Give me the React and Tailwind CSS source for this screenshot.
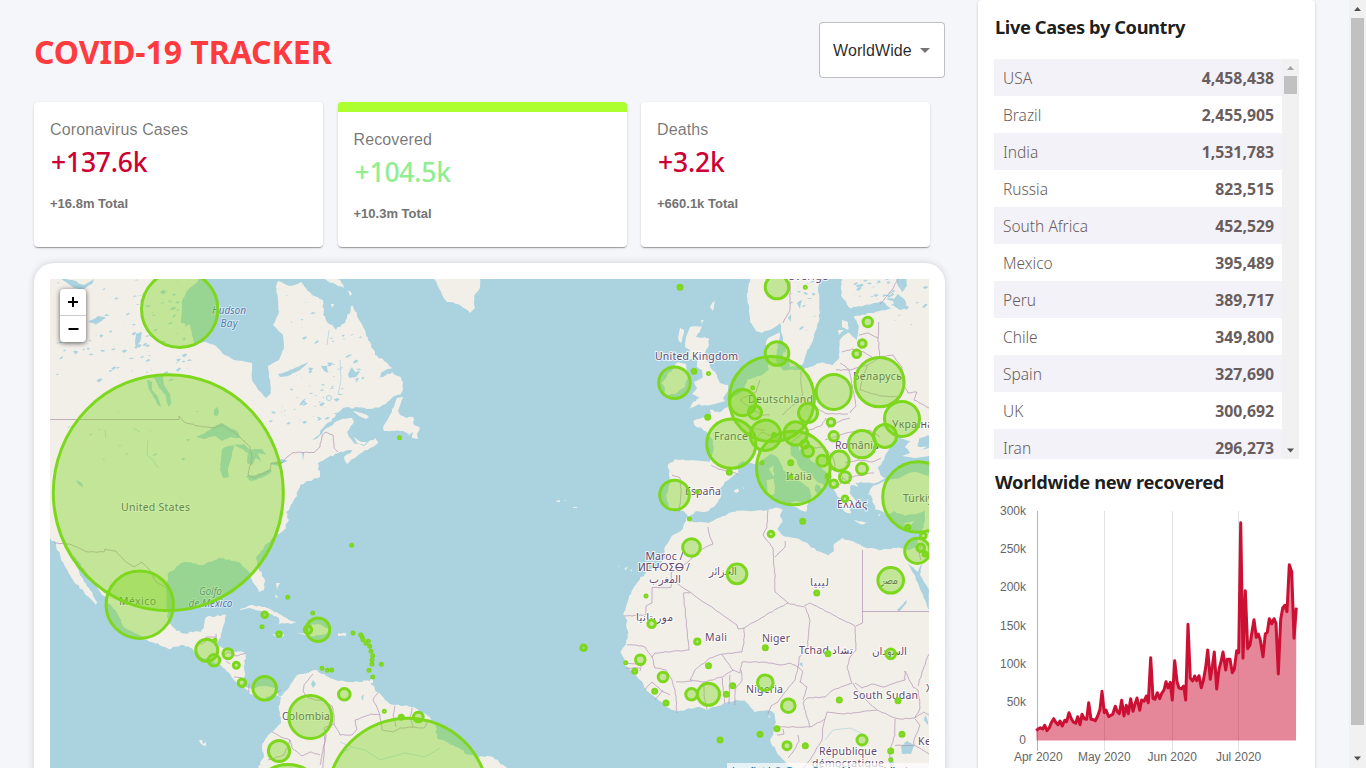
import React from "react";

const X = (lon) => 720 + 5.69 * lon;
const Y = (lat) =>
  736.5 - 325.95 * Math.log(Math.tan(Math.PI / 4 + (lat * Math.PI) / 360));

function geo(list, close = true) {
  let d = "";
  for (let i = 0; i < list.length; i += 2) {
    d += (i ? "L" : "M") + X(list[i]).toFixed(1) + " " + Y(list[i + 1]).toFixed(1);
  }
  return close ? d + "Z" : d;
}

const rand = (() => {
  let s = 7;
  return () => {
    s = (s * 16807) % 2147483647;
    return s / 2147483647;
  };
})();

// Adds small irregular detours between vertices so that coasts look natural.
function rough(d, amp = 1.1) {
  return d.replace(/[^MZ]+/g, (seg) => {
    const n = seg.match(/-?\d+(\.\d+)?/g);
    if (!n) return seg;
    const p = n.map(Number);
    let out = p[0] + " " + p[1];
    for (let i = 2; i < p.length; i += 2) {
      const dx = p[i] - p[i - 2];
      const dy = p[i + 1] - p[i - 1];
      const steps = Math.min(14, Math.floor(Math.hypot(dx, dy) / 2.6));
      for (let k = 1; k < steps; k++) {
        const t = k / steps;
        out +=
          "L" + (p[i - 2] + dx * t + (rand() - 0.5) * 2 * amp).toFixed(1) +
          " " + (p[i - 1] + dy * t + (rand() - 0.5) * 2 * amp).toFixed(1);
      }
      out += "L" + p[i] + " " + p[i + 1];
    }
    return out;
  });
}

const americas =
  "M40 270L278 270 277 281 283 283 290 286 301 282 306 288 312 295 323 300 323 315 329 324 336 330 345 323 352 305 357 316 363 327 370 342 375 355 384 361 393 368 384 371 377 378 385 376 392 372 398 376 403 382 402 392 390 400 378 408 343 408 335 417 323 428 318 437 327 428 334 423 340 420 352 418 354 422 347 432 351 439 355 444 364 446 368 442 375 438 378 443 370 448 363 452 355 458 347 464 344 457 352 450 338 453 318 463 320 477 308 481 300 485 295 498 289 510 286 512 289 520 284 530 274 537 264 547 256 558 257 565 264 578 264 590 259 592 252 580 249 572 239 562 221 558 211 562 201 565 190 562 181 563 169 572 166 587 167 607 169 623 181 633 201 632 206 617 226 615 221 637 216 644 227 650 246 653 244 677 242 685 252 689 265 686 276 689 279 697 287 690 297 675 314 670 333 679 350 682 370 681 375 690 385 700 395 705 412 707 430 717 436 727 437 738 453 745 470 755 493 757 508 769 508 780 262 780 258 766 264 757 262 747 267 737 281 723 279 710 281 697 272 694 262 700 249 692 234 680 221 665 201 657 191 648 181 645 171 649 147 640 124 627 117 613 101 593 88 575 77 560 67 547 84 582 97 602 96 605 84 592 71 577 61 560 56 544 50 538 40 534Z";

const smallLand = [
  "M434 279L440 290 447 302 458 304 470 313 475 308 474 296 480 288 480 270 434 270Z",
  "M325 279L333 283 344 288 340 280 330 275Z",
  "M348 290L352 294 350 296Z",
  "M331 304L334 304 332 308Z",
  "M264 280L269 284 268 291 264 289Z",
  "M240 279L247 279 244 285Z",
  "M353 411L362 413 369 417 366 419 359 416Z",
  "M354 437L362 442 367 442 364 445 357 443Z",
  "M403 397L397 398 394 407 390 415 383 428 384 431 403 431 409 434 405 438 413 432 412 438 418 439 417 434 420 428 414 425 413 417 407 418 400 415 398 411Z",
  "M239 610L251 605 267 608 284 617 297 623 279 624 279 618 262 611 250 608Z",
  "M297 633L310 633 305 626 318 624 332 630 322 635 309 636Z",
  "M338 633L346 633 346 636 338 636Z",
  "M272 634L284 634 284 636 276 637Z",
  "M276 583L280 583 277 590Z",
  "M275 594L278 597 276 598Z",
  "M371 679L373 679 373 683 369 683Z",
  "M199 740L202 740 203 744 206 742 206 746 201 744Z",
  "M556 501L560 500 560 502 557 502ZM573 507L577 507 577 508 573 508ZM564 500L566 500 566 501Z",
  "M690 327L702 326 696 337 709 338 709 345 703 357 708 362 712 370 717 375 720 383 728 385 728 391 723 398 725 401 710 405 697 405 688 410 693 402 700 398 692 394 697 388 694 382 703 377 702 370 697 367 699 357 688 360 690 350 685 347 686 337Z",
  "M680 328L684 330 681 343 678 338Z",
  "M712 303L715 301 713 311 710 307Z",
  "M701 320L704 320 702 325Z",
  "M668 373L673 369 678 362 686 364 688 374 685 387 677 393 663 396 665 388 661 383 666 378Z",
  "M750 279L747 297 749 310 750 322 756 331 762 333 770 330 780 323 783 340 788 357 790 367 802 365 807 350 813 340 817 327 820 313 818 290 822 270 750 270Z",
  "M787 352L792 357 786 360 783 356Z",
  "M842 320L848 322 848 330 842 327Z",
  "M838 330L844 330 839 335Z",
];

const geoLand = [
  // Europe with the Balkans and the Russian plain
  [-4.7, 48.4, -3, 48.8, -1.5, 48.7, -1.8, 49.7, 0, 49.4, 1.6, 50.2, 2, 51, 4, 51.7, 4.8, 53, 7, 53.4, 8.6, 54, 8.2, 55.5, 8.2, 57, 10.5, 57.7, 10.2, 56.3, 9.8, 55, 11, 54, 14, 54, 18, 54.8, 19.8, 54.5, 21, 55.3, 21, 57, 22.5, 57.7, 24, 57, 24.4, 58.3, 23.5, 59.2, 27, 59.5, 30, 59.9, 28.5, 60.5, 23, 59.9, 21.3, 61, 21.5, 63, 38, 63, 38, 44.5, 36.6, 45.4, 38, 46.9, 35, 46.3, 34.8, 45.3, 36.4, 45.3, 35, 44.8, 33.6, 44.4, 32.5, 45.3, 33.5, 46, 31, 46.6, 29.7, 45, 28.6, 43.5, 27.7, 42.6, 28.2, 41.7, 29, 41.2, 27, 40.6, 26.1, 40.7, 23.8, 40.7, 24.3, 40.1, 23, 40.4, 22.8, 39.3, 24, 38.1, 23.4, 37.4, 22.8, 37.5, 23.1, 36.5, 22.4, 36.5, 21.7, 36.8, 21.2, 37.7, 22, 38.3, 21, 38.6, 19.5, 40.2, 19.4, 41.6, 17.5, 42.8, 16, 43.5, 15, 44.3, 14.5, 45.2, 13.9, 44.8, 13.6, 45.6, 12.4, 45.4, 12.4, 44.3, 13.5, 43.6, 14, 42.7, 15, 42, 16.1, 41.8, 16.5, 41.2, 18.4, 40.3, 18.3, 39.8, 17, 40.5, 16.6, 39.7, 17.1, 39, 16.4, 38.3, 15.7, 38, 16.1, 38.8, 15.6, 40, 14.3, 40.7, 13.2, 41.2, 12.2, 41.8, 11.1, 42.4, 10.2, 43.9, 8.9, 44.4, 7.5, 43.7, 6, 43.1, 4, 43.5, 3.1, 43, 3.2, 41.9, 0.8, 40.8, -0.3, 39.4, 0.2, 38.7, -0.7, 37.7, -2, 36.8, -4.4, 36.7, -5.5, 36, -6.4, 36.8, -7.5, 37.1, -9, 37, -9.4, 38.7, -8.7, 41, -9.2, 43, -8, 43.7, -1.8, 43.4, -1.2, 44.7, -1.2, 46, -2.5, 47.2, -4.5, 47.9],
  // Anatolia, the Levant and Africa
  [26.2, 39.5, 27, 40.3, 29, 40.9, 31.3, 41.2, 33.3, 42, 35, 42, 38, 41, 38, -8, 13, -8, 12, -5, 10, -2.8, 8.8, -0.7, 9.4, 0.8, 9.8, 2.5, 9.6, 4, 8.5, 4.6, 6.1, 4.3, 5.3, 5.2, 4.3, 6.3, 2.7, 6.4, 1, 5.9, -2, 4.8, -4, 5.2, -7.5, 4.4, -9, 5, -11.4, 6.9, -13, 8.2, -13.7, 9.6, -15, 11, -16.7, 12.4, -16.8, 13.5, -17.5, 14.7, -16.5, 16, -16.1, 18, -16.5, 19, -16.3, 20, -17, 21, -16, 24, -14.5, 26.2, -12.9, 27.9, -11.5, 28.4, -9.7, 29.8, -9.8, 31.4, -8.5, 33.2, -6.8, 34, -5.9, 35.8, -5, 35.3, -2, 35.1, 0, 35.9, 3, 36.9, 5, 36.8, 8, 36.9, 9.8, 37.3, 11, 37, 10.5, 36.1, 11, 35.3, 10.1, 34.2, 11, 33.3, 13, 32.9, 15.3, 32.2, 17, 31, 19, 30.3, 20, 30.9, 20, 32, 21.5, 32.9, 23, 32.5, 25, 31.7, 28, 31.1, 30, 31.3, 31.5, 31.5, 33, 31.1, 34.4, 31.5, 35, 33, 35.8, 34.5, 36, 36.9, 34, 36.3, 32.5, 36.1, 30.6, 36.8, 29.5, 36.2, 28.3, 36.8, 27.3, 37, 26.8, 38.5],
  [12.5, 38, 15.5, 38.2, 15.1, 36.7, 12.5, 37.6],
  [8.2, 41, 9.5, 41.2, 9.6, 39.2, 8.4, 39],
  [8.6, 42.5, 9.5, 43, 9.4, 41.5],
  [23.5, 35.5, 26.3, 35.2, 24.8, 34.9],
  [32.3, 35, 34.5, 35.6, 33.7, 34.9, 32.6, 34.7],
  [2.4, 39.6, 3.1, 39.9, 3.4, 39.5, 2.8, 39.3],
  [4, 40.05, 4.3, 40, 4.2, 39.8],
  [11, 55.7, 12.5, 56, 12.2, 55, 11.2, 55.2],
  [27.9, 36.4, 28.2, 36.3, 27.8, 36],
  [26, 39.3, 26.6, 39.2, 26.2, 39],
  [25.9, 38.5, 26.1, 38.3, 25.9, 38.2],
  [-17.9, 28.8, -17.7, 28.6, -17.8, 28.5],
  [-16.8, 28.3, -16.2, 28.6, -16.6, 28],
  [-15.8, 28.1, -15.4, 28.1, -15.6, 27.8],
  [-14.1, 28.7, -13.8, 28.7, -14, 28.2],
  [8.5, 3.7, 8.9, 3.6, 8.6, 3.2],
];

const waters = [
  "M201 270L198 281 188 290 182 301 181 323 190 325 192 335 194 343 206 342 216 346 223 354 234 360 247 362 252 363 252 380 257 388 266 398 271 393 270 380 268 366 279 360 284 347 283 335 273 325 279 312 278 300 276 287 278 281 278 270Z",
  "M196 437L206 432 217 425 222 423 230 428 238 432 240 438 230 437 222 441 214 436 204 439Z",
  "M222 449L228 446 234 445 232 455 228 468 229 477 223 478 220 470 221 458Z",
  "M234 445L244 444 250 450 262 449 266 455 258 453 261 462 256 458 252 465 247 463 248 453 240 448Z",
  "M246 476L256 475 270 469 272 471 262 478 250 481Z",
  "M270 464L282 459 288 461 278 466Z",
  "M154 377L163 376 164 385 170 394 171 404 168 407 166 396 159 388Z",
  "M147 380L152 382 152 390 158 397 161 407 158 405 152 394 149 390Z",
  "M214 410L217 407 219 411 217 416 214 415Z",
  "M60 278L72 280 84 285 94 279 92 284 82 290 74 288Z",
  "M88 322L98 316 106 318 96 324Z",
  "M136 334L142 332 140 342 136 349 135 342Z",
  "M76 480L82 483 83 487 78 484Z",
  "M312 440L320 434 326 426 329 424 322 434 316 439Z",
  "M302 452L304 452 303 461Z",
  "M299 406L303 400 306 398 303 404Z",
  "M278 374L285 372 298 367 308 362 300 370 288 376 280 377Z",
  "M348 374L352 367 355 372 360 371 356 377 349 378Z",
  "M321 366L327 366 328 373 324 371Z",
  "M907 563L914 574 919 586 929 610 929 590 920 575 922 562 918 572 911 566Z",
  "M901 746L907 741 914 745 911 754 902 754Z",
  "M892 755L894 762 893 768 890 765Z",
  "M925 715L928 722 928 725 924 720Z",
  "M897 610L903 604 907 600 906 604 899 612Z",
  "M893 300L898 294 905 300 907 308 900 310 894 306Z",
  "M896 277L906 277 907 286 902 292 897 284Z",
  "M797 303L802 300 800 309Z",
  "M788 318L791 314 791 322Z",
  "M361 697L364 694 363 701Z",
  "M313 680L316 684 313 688 311 684Z",
  "M799 664L802 662 803 667Z",
];

const lakes = [];
const regions = [
  [56, 282, 130, 100, 75], [130, 282, 60, 90, 30], [282, 360, 60, 60, 34],
  [326, 335, 40, 50, 18], [262, 400, 60, 30, 14], [285, 290, 30, 60, 8], [788, 281, 26, 50, 14],
  [852, 280, 40, 22, 26], [890, 280, 38, 50, 12], [60, 400, 150, 60, 12],
];
regions.forEach(([x, y, w, h, n]) => {
  for (let i = 0; i < n; i++) {
    const a = x + rand() * w;
    const b = y + rand() * h;
    const s = 0.8 + rand() * 2.8;
    lakes.push(
      `M${a.toFixed(1)} ${b.toFixed(1)}l${s.toFixed(1)} ${(-s * rand()).toFixed(1)}l${(s * 0.7).toFixed(1)} ${(s * 0.3).toFixed(1)}l${(-s).toFixed(1)} ${(s * rand()).toFixed(1)}Z`
    );
  }
});

const borders = [
  "M50 419.5L179 419.5",
  "M179 419.5L179 416 184 422 198 426 214 428 222 425 238 435 250 447 252 458 248 475 255 478 270 470 271 463 282 463 287 457 293 452.5 314 452.5 320 447 322 436 326 432 333 435 334 448 338 452",
  "M54 543L69 544 88 552 104 552 105 549 116 551 126 562 134 567 142 562 150 570 156 582 166 588",
  "M206 637L206 641 202 644 196 644M206 637L216 637M216 634L216 643M223 655L228 652 236 656 246 653M226 661L230 664M234 677L242 678M249 684L249 692M277 693L281 690",
  "M313 674L304 685 303 691 307 697 315 700 324 700M324 700L332 706 334 715 334 724 340 735 352 735 357 729 355 720 363 717 371 714 380 715 376 705 373 700 378 693M395 706L393 715 396 727 M412 708L410 717 413 728M380 715L382 730 393 732 400 728 412 727 424 728 429 719M334 724L324 728 326 735 320 765M272 732L281 737 290 740 292 748 302 756 310 752 320 755M290 740L284 755 268 760M325 735L323 768",
  "M708 527L710 537 713 544 700 550 688 562 671 573 671 587.5 652 587.5 652 603 646 606 646 615 624 616",
  "M671 578L678 584 737 625 738 629 744 628 780 607 788 603",
  "M768 510L767 527 763 535 773 548 775 577 775 592 788 603 M775 557L785 547 785 541",
  "M690 593L683.5 593 689 650 655 653 652 657 645 647 636 645 627 645",
  "M744 628L744 643 742 652 723 654 710 658 695 670 690 680 704 682 722 677 733 670 728 663 722 655",
  "M733 670L740 673 742 662 763 662 780 665 790 663 798 667",
  "M788 603L803 607 810 603 855 626 856 650 850 657 847 667 850 677 852 683 833 690 825 697 807 698 803 703 810 727 825 719",
  "M805 607L810 620 807 650 799 657 798 667 803 672 800 682 807 687 803 700",
  "M798 667L795 680 785 692 778 702 771 706 768 714",
  "M810 727L777 727M783 729L784 734 777 735M798 735L799 742 793 752 788 758 M825 719L823 727 822 740 810 760 803 768",
  "M825 719L827 712 843 714 877 710 866 700 855 687 853 683",
  "M855 683L862 688 872 684 884 687 897 682 905 680 905 671 908 677 913 687 918 690 920 708 915 718 900 719 895 718 877 710",
  "M929 654L922 672 918 686M895 719L895 735 890 750 890 768M915 718L924 712 929 715M915 719L920 725 914 740 914 745.5 895 745.5M914 745L929 754",
  "M704 682L704 695 707 709M722 678L725 704M730 675L729 704M735 705L735 690 742 680 741 670",
  "M652 657L655 668 666 670 672 680 675 690 676 700 677 713M676 682L692 681M626 668L640 668M645 690L652 682 663 692 670 695M655 700L663 690M640 671L641 664 627 663",
  "M711 465L718 469 728 471 738 474M672 475L680 478 681 492 679 512",
  "M790 279L790 310 783 323M898 279L892 290 880 304",
  "M859 335L868 333 878 338 879 322M878 338L880 357 868 365 M842 352L852 349 864 352 872 357M840 363L850 370 868 365M836 370L849 370 854 394 856 406 850 413 M880 357L893 355 902 367 903 383 908 393 917 392 914 400 929 408",
  "M867 366L862 380 860 390 880 396 901 397M801 371L801 385 803 400M782 415L793 405 803 400 815 408 828 414 848 414M790 443L805 432 822 425 826 418M825 440L840 435 852 432M828 428L842 420 850 418M852 432L870 430 880 437M845 463L858 460 872 462 881 458M848 478L866 474 874 473M811 448L824 447 832 455 835 465 830 472M835 467L843 478 838 488M843 478L850 484",
  "M760 380L756 392 740 400 750 408 762 415 770 415M765 430L750 428 760 422M760 455L755 440 762 432 776 438 790 440",
  "M917 545L921 560M920 548L924 540 929 532",
];

const labels = [
  ["United States", 121, 511, 69], ["México", 119, 605, 37], ["Colombia", 282, 720, 48],
  ["United Kingdom", 655, 360, 83], ["France", 714, 440, 34], ["España", 685, 495, 36],
  ["Deutschland", 748, 402.5, 65], ["Sverige", 789, 280, 39], ["Беларусь", 853, 380, 49],
  ["Україна", 892, 428, 41], ["România", 835, 449, 44], ["Italia", 786, 480, 26],
  ["Ελλάς", 837, 508, 30], ["Türkiye", 903, 502, 36], ["Mali", 705, 641, 22],
  ["Niger", 762, 641.5, 28], ["Nigeria", 746, 693, 37], ["Tchad تشاد", 799, 654, 54],
  ["South Sudan", 853, 699, 65], ["République", 819, 755, 58], ["démocratique", 812, 767, 72],
  ["Maroc /", 645.5, 559.5, 38], ["ⵍⵎⵖⵔⵉⴱ /", 638, 571, 52], ["المغرب", 649, 583, 32],
  ["موريتانيا", 636, 621, 37], ["الجزائر", 709, 575, 28], ["ليبيا", 810, 586, 19],
  ["مصر", 880, 584, 18], ["السودان", 872, 655, 35], ["Kenya", 918, 745, 32], ["X", 926, 692, 7],
];

const dots = [
  [179.7, 309.3, 38.2], [139.7, 604.7, 33.7], [206.7, 650.3, 11], [214, 660.3, 5.7], [215, 640.3, 1],
  [228, 653.7, 5], [236.3, 665.3, 3], [242, 682.7, 3.8], [264.7, 688.3, 11.8], [264.7, 614.7, 2.8],
  [262, 626.7, 1], [279, 634.3, 2.2], [287.7, 597.3, 1], [312.7, 613, 1], [318, 629.7, 11.8],
  [308, 629.7, 3.7], [322, 668.3, 1], [327.3, 670.3, 1], [331.7, 670, 1], [310.3, 717, 21.5],
  [279, 751, 10.6], [288, 800, 35.5], [344.3, 694.3, 5.8], [351.7, 545.3, 1], [399.5, 437.7, 1],
  [583.5, 647.7, 2.8], [353, 633, 1], [360.7, 634.7, 1], [362, 636.7, 1], [363, 639.7, 1],
  [368.3, 641.3, 1], [366, 643.3, 1], [369.7, 646.3, 1], [371, 651.3, 1], [372.7, 655.7, 1],
  [372, 660, 1], [372, 664, 1], [381.3, 664.3, 1], [369, 670.3, 1], [372.7, 677, 1],
  [384.3, 711.3, 1], [401.3, 717.3, 2], [418.3, 717, 4.8], [407.7, 798.7, 80.5],
  [680, 287.3, 2], [674.5, 382.7, 15.8], [694, 371.3, 2], [708.5, 373.5, 1], [707.7, 417.3, 2],
  [731.3, 443.7, 24.6], [674.5, 495, 14.8], [697.5, 491.7, 1], [729.3, 472.3, 2], [689.5, 519, 1],
  [771.8, 399, 42.6], [777, 287, 11.8], [777, 353.5, 11.8], [752.7, 387.7, 1], [742.7, 402.5, 13],
  [755, 412.3, 6.6], [765.5, 435.3, 15.2], [774, 435, 1.5], [762, 462.7, 1], [793.3, 468, 36.8],
  [805.3, 287.3, 1], [867.8, 322, 4.7], [862.3, 343.5, 3.8], [856.7, 353.7, 3.8],
  [879.5, 382.2, 24.6], [833.7, 391.9, 17.5], [808, 413, 9.5], [902, 418.9, 17.5], [885, 436, 11.5],
  [862, 444.2, 13.6], [795.7, 433.5, 11.7], [831, 422.3, 3.8], [833.7, 436.3, 4.7], [804.7, 444.3, 3.8],
  [808, 451.3, 5.5], [822.3, 460.7, 5.5], [839.3, 460.9, 9.8], [862, 468.7, 5.5], [845, 477.3, 5.5],
  [833.7, 483.7, 3.8], [828, 476.3, 2], [845, 498.7, 2.8], [790.7, 462.7, 2], [790.7, 477, 1],
  [802.7, 521.3, 2], [918, 497, 35.3], [771, 534, 2.8], [890.7, 580.3, 12.8], [917.3, 550.9, 12.6],
  [920.7, 547.7, 3.8], [925, 554, 2], [923.3, 535.7, 2.8], [907.7, 527.3, 2], [816.7, 593, 2],
  [828, 653.7, 2], [890.7, 653.9, 4.8], [839.3, 700, 2], [898, 700.7, 2], [788.3, 705.7, 6.8],
  [777, 728.7, 2], [787, 745.7, 4], [805.3, 745.7, 2], [862, 740, 5], [902, 734.3, 2],
  [890.7, 751, 2], [890.7, 759.7, 1], [691.5, 547.5, 8.8], [737, 573.9, 9.8], [646, 596, 1],
  [651.7, 623.7, 3.8], [697.3, 641.7, 2.6], [765.3, 647.7, 2], [640.3, 659.7, 4.8],
  [625.7, 662.7, 1], [634.7, 671.3, 2], [663, 677, 4.8], [708.5, 665.7, 2], [654.7, 691.3, 2],
  [666, 703, 2], [691.5, 694.3, 5.8], [708.5, 694.3, 11], [726.3, 694.3, 2], [732.7, 685.7, 2],
  [765.3, 682.7, 7.8], [760, 734.3, 2], [720, 740, 2],
];

const landPaths = [rough(americas), ...smallLand.map((d) => rough(d, 0.8)), ...geoLand.map((l) => rough(geo(l), 0.8))];
const waterPaths = waters.map((d) => rough(d, 0.5));
const borderPaths = borders.map((d, i) => (i ? rough(d, 0.45) : d));

function WorldMap() {
  return (
    <svg viewBox="50 279 879 489" className="block h-[489px] w-[879px] bg-[#aad3df]" fontFamily='"Noto Sans", "DejaVu Sans", sans-serif'>
      {landPaths.map((d, i) => <path key={i} d={d} fill="#f2efe9" />)}
      <path d="M902 456L913 452 929 448 929 456 915 458Z" fill="#f2efe9" />
      {waterPaths.map((d, i) => <path key={i} d={d} fill="#aad3df" />)}
      <path d={lakes.join("")} fill="#aad3df" />
      <circle cx="329" cy="398" r="2.5" fill="none" stroke="#aad3df" />
      <path d="M340 742L352 747 365 750 380 760 405 753 425 757 440 748M105 430L106 438M148 440L147 455 153 460 158 468M133 428L140 432M825 740L833 730 850 728 865 735M340 755L350 748M340 360L341 380 338 395M329 330L327 345" fill="none" stroke="#aad3df" strokeWidth="0.7" />
      {borderPaths.map((d, i) => <path key={i} d={d} fill="none" stroke="#b394b5" strokeOpacity="0.8" strokeWidth="0.9" />)}
      <path d="M862.5 550L862.5 623 856 626M862 611.5L929 611.5" fill="none" stroke="#b394b5" strokeOpacity="0.8" strokeWidth="0.9" />
      <g fontSize="10.5" fill="#654a70" stroke="#fff" strokeOpacity="0.75" strokeWidth="2.2" paintOrder="stroke" strokeLinejoin="round">
        {labels.map(([t, x, y, w]) => (
          <text key={t} x={x} y={y} textLength={w} direction="ltr">{t}</text>
        ))}
      </g>
      <g fontSize="10" fontStyle="italic" fill="#5377b0" stroke="#fff" strokeOpacity="0.55" strokeWidth="1.6" paintOrder="stroke">
        <text x="212" y="314" textLength="34">Hudson</text>
        <text x="220.5" y="326.5" textLength="17">Bay</text>
        <text x="199" y="595" textLength="23">Golfo</text>
        <text x="188.5" y="607" textLength="44">de México</text>
      </g>
      <g fill="#7dd71d" fillOpacity="0.4" stroke="#7dd71d" strokeWidth="3">
        <ellipse cx="168.3" cy="492.7" rx="115" ry="118" />
        {dots.map(([x, y, r], i) => <circle key={i} cx={x} cy={y} r={r} />)}
      </g>
    </svg>
  );
}

const series = [
  199, 902, 204, 897, 211, 893, 218, 897, 224, 886, 231, 902, 238, 893, 244, 878, 251, 866, 257, 877, 264, 884, 270, 873, 277, 888, 284, 871,
  290, 875, 297, 848, 304, 866, 310, 876, 317, 880, 323, 860, 330, 884, 336, 853, 343, 866, 350, 868, 356, 818, 363, 868,
  370, 869, 376, 872, 383, 858, 390, 838, 396, 784, 403, 848, 408, 840, 416, 860, 428, 853, 436, 829, 442, 845, 448, 851,
  455, 811, 462, 858, 469, 826, 475, 851, 482, 806, 489, 844, 495, 822, 501, 804, 509, 841, 515, 810, 522, 814, 529, 798,
  535, 818, 542, 683, 549, 805, 555, 808, 562, 788, 569, 806, 575, 790, 582, 780, 588, 755, 594, 774, 601, 757, 607, 810,
  614, 692, 621, 755, 627, 774, 634, 776, 641, 768, 647, 810, 654, 583, 661, 745, 668, 753, 674, 738, 680, 752, 687, 737,
  694, 773, 700, 752, 707, 712, 713, 660, 721, 748, 727, 710, 733, 666, 740, 777, 747, 718, 753, 695, 759, 666, 767, 720,
  772, 688, 780, 688, 787, 728, 793, 718, 800, 662, 806, 668, 812, 278, 819, 685, 826, 482, 833, 656, 840, 645, 846, 605,
  852, 569, 859, 622, 865, 612, 871, 630, 879, 680, 886, 612, 892, 607, 898, 566, 905, 582, 912, 566, 918, 580, 925, 732,
  932, 568, 938, 534, 944, 526, 951, 545, 958, 404, 965, 425, 972, 625, 979, 533,
];
let lineD = "";
for (let i = 0; i < series.length; i += 2) {
  lineD += (i ? "L" : "M") + (970 + series[i] / 3).toFixed(1) + " " + (430 + series[i + 1] / 3).toFixed(1);
}

function Chart() {
  return (
    <svg viewBox="994 498 305 270" className="block h-[270px] w-[305px]" fontFamily='"Liberation Sans", Arial, sans-serif'>
      <g strokeWidth="1">
        <path d="M1037.5 511V751" stroke="#b5b5b5" />
        <path d="M1104.5 511V751M1172.5 511V751M1238.5 511V751" stroke="#e2e2e2" />
      </g>
      <path d={lineD + "L1296 740.5L1036.5 740.5Z"} fill="#cc1034" fillOpacity="0.5" />
      <path d={lineD} fill="none" stroke="#cc1034" strokeWidth="3" strokeLinejoin="round" />
      <g fontSize="12" fill="#666">
        {["300k", "250k", "200k", "150k", "100k", "50k", "0"].map((t, i) => (
          <text key={t} x="1026" y={515 + i * 38.2} textAnchor="end">{t}</text>
        ))}
        {[["Apr 2020", 1038.3], ["May 2020", 1104.3], ["Jun 2020", 1172.3], ["Jul 2020", 1238.6]].map(([t, x]) => (
          <text key={t} x={x} y="761" textAnchor="middle">{t}</text>
        ))}
      </g>
    </svg>
  );
}

const rows = [
  ["USA", "4,458,438"], ["Brazil", "2,455,905"], ["India", "1,531,783"], ["Russia", "823,515"],
  ["South Africa", "452,529"], ["Mexico", "395,489"], ["Peru", "389,717"], ["Chile", "349,800"],
  ["Spain", "327,690"], ["UK", "300,692"], ["Iran", "296,273"],
];

function InfoBox({ title, cases, total, active, green }) {
  return (
    <div className={"h-[145px] flex-1 overflow-hidden rounded bg-white shadow-[0_2px_1px_-1px_rgba(0,0,0,0.2),0_1px_1px_0_rgba(0,0,0,0.14),0_1px_3px_0_rgba(0,0,0,0.12)] " + (active ? "border-t-[10px] border-[#adff2f]" : "")}>
      <div className="px-4 pt-4 font-['Liberation_Sans',Arial,sans-serif]">
        <p className="text-base leading-6 tracking-[0.12px] text-black/55">{title}</p>
        <h2 className={"pl-px font-['Noto_Sans',sans-serif] text-[26.5px] leading-[40px] font-medium tracking-[-0.2px] " + (green ? "text-[#90ee90]" : "text-[#cc0033]")}>{cases}</h2>
        <p className="mt-3 text-[13px] leading-[19px] font-bold text-[#737373]">{total}</p>
      </div>
    </div>
  );
}

function Arrow({ up, color }) {
  return (
    <svg viewBox="0 0 17 17" className="block size-[17px] shrink-0">
      <path d={up ? "M5 11h7l-3.500-4z" : "M5 6.500h7l-3.500 4z"} fill={color} />
    </svg>
  );
}

export default function App() {
  return (
    <div className="flex h-[768px] w-[1366px] overflow-hidden bg-[#f5f6fa] font-['Noto_Sans',sans-serif]">
      <main className="ml-[34px] flex w-[911px] flex-col">
        <header className="mt-[22px] flex h-14 items-center justify-between">
          <h1 className="pt-1 text-[32px] leading-none font-bold tracking-[-0.05px] whitespace-nowrap text-[#ff3b3f]">COVID-19 TRACKER</h1>
          <div className="flex h-14 w-[126px] items-center rounded border border-black/25 bg-white pl-[13px] font-['Liberation_Sans',Arial,sans-serif] text-base text-black/85">
            <span className="pt-px tracking-[0.1px]">WorldWide</span>
            <svg viewBox="0 0 24 24" className="ml-px size-6" fill="#757575"><path d="M7 10l5 5 5-5z" /></svg>
          </div>
        </header>
        <section className="mt-6 flex gap-[14.5px] pr-[15px]">
          <InfoBox title="Coronavirus Cases" cases="+137.6k" total="+16.8m Total" />
          <InfoBox title="Recovered" cases="+104.5k" total="+10.3m Total" active green />
          <InfoBox title="Deaths" cases="+3.2k" total="+660.1k Total" />
        </section>
        <section className="mt-4 h-[600px] shrink-0 rounded-[20px] bg-white p-4 shadow-[0_0_8px_-1px_rgba(0,0,0,0.2)]">
          <div className="relative h-[489px] w-[879px] overflow-hidden">
            <WorldMap />
            <div className="absolute top-[10px] left-[10px] w-[26px] overflow-hidden rounded bg-white shadow-[0_1px_5px_rgba(0,0,0,0.65)]">
              <div className="flex h-[27px] items-center justify-center border-b border-[#ccc]">
                <svg viewBox="0 0 26 26" className="size-[26px]"><path d="M8 13h10M13 8v10" stroke="#000" strokeWidth="2" /></svg>
              </div>
              <div className="flex h-[26px] items-center justify-center">
                <svg viewBox="0 0 26 26" className="size-[26px]"><path d="M8.500 13h10" stroke="#000" strokeWidth="2" /></svg>
              </div>
            </div>
            <div className="absolute top-[484px] right-0 w-[202px] bg-white/70 px-[5px] font-['Liberation_Sans',Arial,sans-serif] text-[11px] leading-[17px] whitespace-nowrap text-[#333]">
              <span className="text-[#0078a8]">Leaflet</span> | © <span className="text-[#0078a8]">OpenStreetMap</span> contributors
            </div>
          </div>
        </section>
      </main>
      <aside className="ml-[33px] flex h-[768px] w-[337px] flex-col rounded-t bg-white px-4 pt-[15px] shadow-[0_1px_3px_rgba(0,0,0,0.2)]">
        <h3 className="pl-px text-[18.3px] leading-[23px] font-bold tracking-[-0.4px] whitespace-nowrap text-black/90">Live Cases by Country</h3>
        <div className="mt-[21px] flex h-[400px] w-[305px] shrink-0">
          <div className="flex-1 overflow-hidden">
            {rows.map(([c, n], i) => (
              <div key={c} className={"flex h-[37px] items-center justify-between px-2 pt-[3px] text-[#6a5d5d] " + (i % 2 ? "bg-white" : "bg-[#f3f2f8]")}>
                <span className="pl-px text-[15.5px] font-[350]">{c}</span>
                <strong className="text-[15.8px] font-bold">{n}</strong>
              </div>
            ))}
          </div>
          <div className="flex w-[17px] flex-col items-center justify-between bg-[#f1f1f1]">
            <div>
              <Arrow up color="#a3a3a3" />
              <div className="mx-auto h-[18px] w-[13px] bg-[#c1c1c1]" />
            </div>
            <Arrow color="#505050" />
          </div>
        </div>
        <h3 className="mt-[11px] pl-px text-[18.3px] leading-[23px] font-bold tracking-[-0.3px] whitespace-nowrap text-black/90">Worldwide new recovered</h3>
        <div className="mt-[5px]"><Chart /></div>
      </aside>
      <div className="ml-auto flex w-[17px] flex-col items-center bg-[#f1f1f1]">
        <Arrow up color="#505050" />
        <div className="mt-px h-[707px] w-[13px] bg-[#c1c1c1]" />
        <div className="mt-auto pb-px"><Arrow color="#505050" /></div>
      </div>
    </div>
  );
}
